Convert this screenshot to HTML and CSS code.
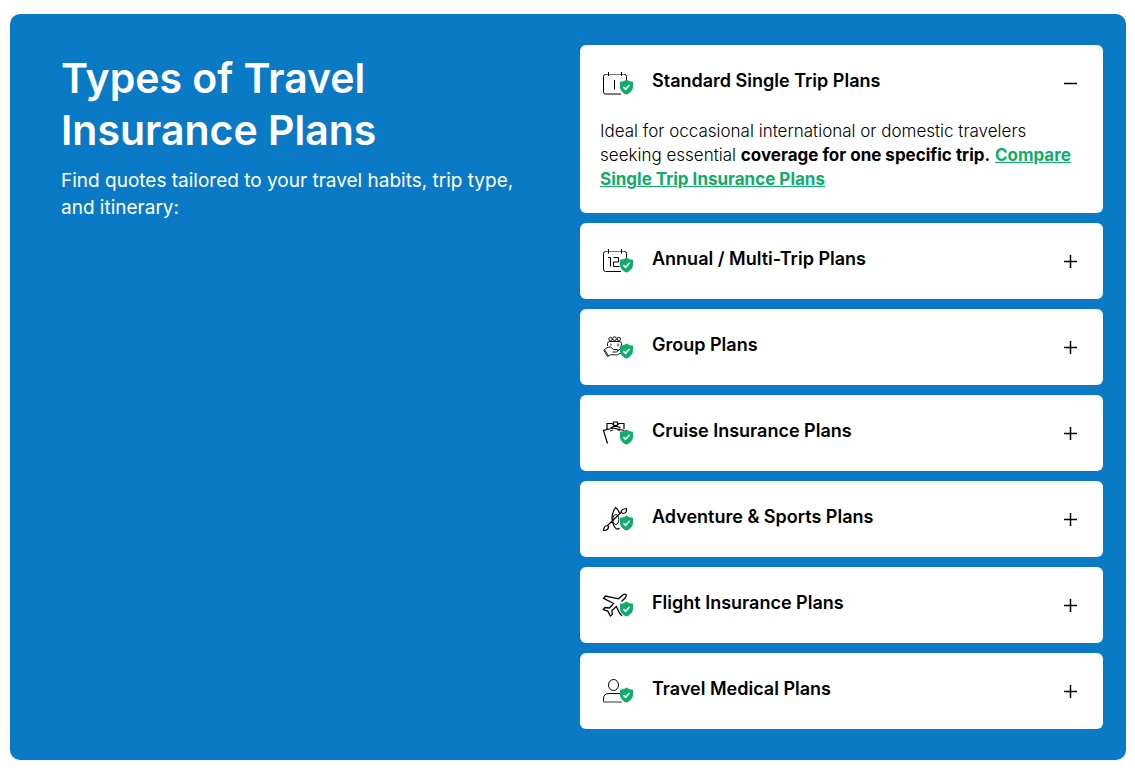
FILE: index.html
```html
<!DOCTYPE html>
<html lang="en">
<head>
<meta charset="utf-8">
<meta name="viewport" content="width=device-width, initial-scale=1">
<title>Types of Travel Insurance Plans</title>
<link rel="stylesheet" href="styles.css">
</head>
<body>
<svg class="defs" aria-hidden="true">
  <symbol id="shield" viewBox="0 0 32 32">
    <path d="M24.5 12.4C26.6 13.9 28.6 14.6 31 14.7V19.5C31 23.3 28.5 26 24.5 27.6C20.5 26 18 23.3 18 19.5V14.7C20.4 14.6 22.4 13.9 24.5 12.4Z" fill="#0ead69" stroke="none"/>
    <path d="M21.4 20.2L23.6 22.3L27.6 17.8" fill="none" stroke="#fff" stroke-width="1.7"/>
  </symbol>
</svg>
<main class="plans">
  <div class="intro">
    <h2 class="intro-title">Types of Travel Insurance Plans</h2>
    <p class="intro-text">Find quotes tailored to your travel habits, trip type, and itinerary:</p>
  </div>
  <div class="accordion">
    <section class="card">
      <h3 class="card-heading"><button class="card-toggle" type="button" aria-expanded="true" aria-controls="single-trip">
        <svg class="icon" viewBox="0 0 32 32" aria-hidden="true"><path d="M4.500 7.500H3.500Q1.500 7.500 1.500 9.500V25Q1.500 27 3.500 27H19M21.500 7.500H22.500Q24.500 7.500 24.500 9.500V13"/><path class="soft" d="M4.500 7.500H21.500"/><path d="M6.500 5V9M19.500 5V9M12.500 13V22.500"/><use href="#shield"/></svg>
        <span class="card-title">Standard Single Trip Plans</span>
        <svg class="sign" viewBox="0 0 16 16" aria-hidden="true"><path d="M2 8.500H15"/></svg>
      </button></h3>
      <p class="card-text" id="single-trip">Ideal for occasional international or domestic travelers seeking essential <strong>coverage for one specific trip.</strong> <a class="card-link" href="#single-trip">Compare Single Trip Insurance Plans</a></p>
    </section>
    <section class="card">
      <h3 class="card-heading"><button class="card-toggle" type="button" aria-expanded="false">
        <svg class="icon" viewBox="0 0 32 32" aria-hidden="true"><path d="M4.500 6.500H3.500Q1.500 6.500 1.500 8.500V24.500Q1.500 26.500 3.500 26.500H19M21.500 6.500H22.500Q24.500 6.500 24.500 8.500V13"/><path class="soft" d="M4.500 6.500H21.500"/><path d="M6.500 4V8.500M19.500 4V8.500M6 12.500H8.500V21.500M11.500 12.500H16.500V17H11.500V21.500H17.500"/><use href="#shield"/></svg>
        <span class="card-title">Annual / Multi-Trip Plans</span>
        <svg class="sign" viewBox="0 0 16 16" aria-hidden="true"><path d="M2 8.500H15M8.500 2V15"/></svg>
      </button></h3>
    </section>
    <section class="card">
      <h3 class="card-heading"><button class="card-toggle" type="button" aria-expanded="false">
        <svg class="icon" viewBox="0 0 32 32" aria-hidden="true"><g class="thin"><circle cx="8.500" cy="8" r="1.700"/><circle cx="12.500" cy="7.700" r="1.900"/><circle cx="16.800" cy="8" r="1.700"/><path d="M5.500 15V12.500Q5.500 10.500 8 10.500H17Q19.500 10.500 19.500 12.500V15M9 14.500V12.500M16 15.500V12.500M2.500 18.500L5 16.500L8.500 16L11.500 18.500H15.500Q16.500 20.500 14.500 21H10.500M15.500 20L19 17.500M6.500 25L8.500 23.800H15.500L19 21.800M2.500 18.500L1.800 19.200L5.500 25.600L6.500 25Z"/></g><use href="#shield"/></svg>
        <span class="card-title">Group Plans</span>
        <svg class="sign" viewBox="0 0 16 16" aria-hidden="true"><path d="M2 8.500H15M8.500 2V15"/></svg>
      </button></h3>
    </section>
    <section class="card">
      <h3 class="card-heading"><button class="card-toggle" type="button" aria-expanded="false">
        <svg class="icon" viewBox="0 0 32 32" aria-hidden="true"><path d="M5.500 26.500L1.500 13.500L11 11L22.500 13.500M5 12V6.500H10L13.500 9.500L17 6.500H22V12M11.500 8V5H15.500V8M8.500 11L13.500 8.500L18.500 11" stroke-width="1.200"/><path d="M8 14L11 13M15 12.800L18 13.500" class="thin"/><use href="#shield"/></svg>
        <span class="card-title">Cruise Insurance Plans</span>
        <svg class="sign" viewBox="0 0 16 16" aria-hidden="true"><path d="M2 8.500H15M8.500 2V15"/></svg>
      </button></h3>
    </section>
    <section class="card">
      <h3 class="card-heading"><button class="card-toggle" type="button" aria-expanded="false">
        <svg class="icon" viewBox="0 0 32 32" aria-hidden="true"><path stroke-width="1.200" d="M17.500 25Q14.500 28 12 23Q8 15 12 7L13.500 4.500Q17 7 18 12M5.500 22.500L19 9.500M19 9.500Q19 6 24.500 5.500Q25 10 21 10.500ZM5.500 22.500Q2 22.500 1.500 27.500Q6.500 27.500 6.500 23.500Z"/><ellipse cx="13.800" cy="16.500" rx="3" ry="5"/><use href="#shield"/></svg>
        <span class="card-title">Adventure &amp; Sports Plans</span>
        <svg class="sign" viewBox="0 0 16 16" aria-hidden="true"><path d="M2 8.500H15M8.500 2V15"/></svg>
      </button></h3>
    </section>
    <section class="card">
      <h3 class="card-heading"><button class="card-toggle" type="button" aria-expanded="false">
        <svg class="icon" viewBox="0 0 32 32" aria-hidden="true"><path d="M19.500 12.500L23 9Q25 6.500 23.800 5.600Q22.500 4.500 20.500 6.200L16.500 9.800L3.500 7L1.500 9.200L11.500 14.500L7.500 19L3 18.500L1.300 20.500L6 22.300L8.300 27L10.200 25.500L10 21.500L14.300 17.500L17.500 24L20 27" stroke-width="1.300"/><use href="#shield"/></svg>
        <span class="card-title">Flight Insurance Plans</span>
        <svg class="sign" viewBox="0 0 16 16" aria-hidden="true"><path d="M2 8.500H15M8.500 2V15"/></svg>
      </button></h3>
    </section>
    <section class="card">
      <h3 class="card-heading"><button class="card-toggle" type="button" aria-expanded="false">
        <svg class="icon" viewBox="0 0 32 32" aria-hidden="true"><ellipse cx="11.500" cy="10" rx="5" ry="5.500"/><path d="M1.500 27V24Q1.500 18.500 7 18.500H18"/><path class="soft" d="M1 27H20" stroke-width="1.500"/><use href="#shield"/></svg>
        <span class="card-title">Travel Medical Plans</span>
        <svg class="sign" viewBox="0 0 16 16" aria-hidden="true"><path d="M2 8.500H15M8.500 2V15"/></svg>
      </button></h3>
    </section>
  </div>
</main>
</body>
</html>
```

FILE: styles.css
```css
* {
  box-sizing: border-box;
}

body {
  margin: 14px 9px 10px 10px;
  background: #fff;
  color: #000;
  font-family: Inter, "Liberation Sans", sans-serif;
}

.defs {
  display: none;
}

.plans {
  display: grid;
  grid-template-columns: 1fr 1fr;
  gap: 23px;
  padding: 31px 23px 31px 24px;
  border-radius: 10px;
  background: #0a7ac6;
}

.intro {
  padding: 7px 24px 0 27px;
  color: #fff;
}

.intro-title {
  margin: 0;
  max-width: 400px;
  font-size: 41px;
  font-weight: 600;
  line-height: 52px;
}

.intro-text {
  margin: 11px 0 0;
  font-size: 19px;
  line-height: 27px;
}

.accordion {
  display: grid;
  gap: 10px;
}

.card {
  border-radius: 6px;
  background: #fff;
}

.card-heading {
  margin: 0;
}

.card-toggle {
  display: flex;
  align-items: center;
  gap: 18px;
  width: 100%;
  padding: 22px 25px 22px 22px;
  border: 0;
  background: none;
  color: inherit;
  font: inherit;
  text-align: left;
  cursor: pointer;
}

.icon,
.sign {
  flex: none;
  fill: none;
  stroke: #000;
}

.icon {
  width: 32px;
  height: 32px;
}

.sign {
  width: 16px;
  height: 16px;
  stroke-width: 1.5;
}

.soft {
  stroke: #777;
}

.thin {
  stroke-width: 0.9;
}

.card-title {
  flex: 1;
  padding-bottom: 4px;
  font-size: 18px;
  font-weight: 600;
  line-height: 24px;
}

.card-text {
  margin: -2px 0 0;
  padding: 0 26px 22px 20px;
  font-size: 17px;
  font-weight: 300;
  line-height: 24px;
}

.card-text strong,
.card-link {
  font-weight: 700;
}

.card-link {
  color: #0ead69;
}
```
